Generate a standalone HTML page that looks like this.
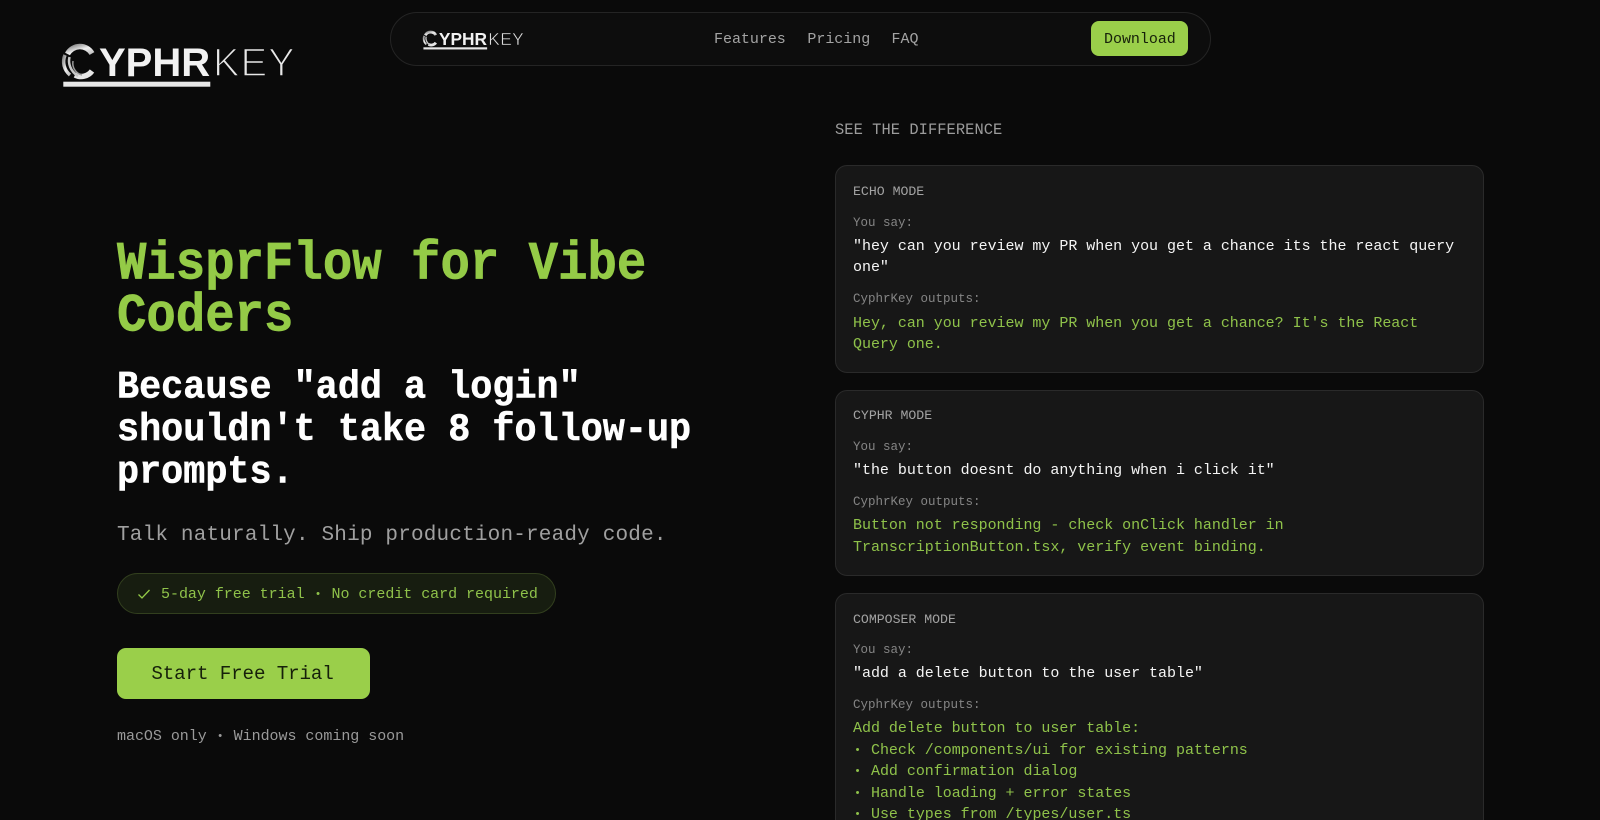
<!DOCTYPE html>
<html lang="en">
<head>
<meta charset="utf-8">
<title>CyphrKey</title>
<style>
html,body{margin:0;padding:0;width:1600px;height:820px;overflow:hidden;background:#0a0a0a}
body{position:relative;font-family:"Liberation Mono",monospace}
.t{position:absolute;white-space:nowrap;margin:0;font-weight:400}
.card{position:absolute;left:835px;width:647px;background:#171717;border:1px solid #2a2a2a;border-radius:12px}
.lab{left:853px;font-size:13.2px;line-height:20px;color:#a3a3a3}
.you{left:853px;font-size:12.5px;line-height:20px;color:#858585}
.usr{left:853px;font-size:15px;line-height:21.4px;letter-spacing:-.03px;color:#f5f5f5}
.out{left:853px;font-size:15px;line-height:21.4px;letter-spacing:-.03px;color:#8fc24a}
.nav{font-size:15px;line-height:20px;letter-spacing:-.03px;color:#a3a3a3;top:30px}
.b{display:inline-block;width:9px;text-align:center;font-size:11px;line-height:0;vertical-align:1px}
</style>
</head>
<body>
<svg width="0" height="0" style="position:absolute">
<defs>
<linearGradient id="g" x1="0" y1="0" x2="1" y2="1"><stop offset="0" stop-color="#8a8a8a"/><stop offset=".5" stop-color="#f0f0f0"/><stop offset="1" stop-color="#bdbdbd"/></linearGradient>
</defs>
</svg>

<svg style="position:absolute;left:60px;top:42px" width="240" height="48" viewBox="0 0 240 48">
<g fill="none">
<path d="M32 11.500A14 14 0 0 0 7.500 12" stroke="url(#g)" stroke-width="5.500"/>
<path d="M32 29A13.500 13.500 0 0 1 15 33" stroke="#e6e6e6" stroke-width="5.500"/>
<path d="M5 13C2 20 4 28 10 33" stroke="url(#g)" stroke-width="3.500"/>
<path d="M9.500 15C8 21 10 29 18 34" stroke="#c8c8c8" stroke-width="2.500"/>
<path d="M13 19C12 25 15 31 22 33" stroke="#9a9a9a" stroke-width="1.500"/>
</g>
<text x="39" y="34" font-family="Liberation Sans" font-weight="700" font-size="40" fill="#f2f2f2">YPHR</text>
<text x="153" y="34" font-family="Liberation Sans" font-weight="400" font-size="40" letter-spacing=".8" fill="#e8e8e8" stroke="#0a0a0a" stroke-width="1.500">KEY</text>
<rect x="3.300" y="39.700" width="147" height="5" fill="#e8e8e8"/>
</svg>

<div style="position:absolute;left:390px;top:12px;width:819px;height:52px;border:1px solid #242424;border-radius:28px;background:#0d0d0d"></div>
<svg style="position:absolute;left:421.700px;top:29.500px" width="104" height="21" viewBox="0 0 240 48">
<g fill="none">
<path d="M32 11.500A14 14 0 0 0 7.500 12" stroke="url(#g)" stroke-width="6.500"/>
<path d="M32 29A13.500 13.500 0 0 1 15 33" stroke="#e6e6e6" stroke-width="6.500"/>
<path d="M5 13C2 20 4 28 10 33" stroke="url(#g)" stroke-width="4"/>
<path d="M9.500 15C8 21 10 29 18 34" stroke="#c8c8c8" stroke-width="3"/>
</g>
<text x="39" y="34" font-family="Liberation Sans" font-weight="700" font-size="40" fill="#f2f2f2">YPHR</text>
<text x="153" y="34" font-family="Liberation Sans" font-weight="400" font-size="40" letter-spacing=".8" fill="#dcdcdc" stroke="#0d0d0d" stroke-width="1">KEY</text>
<rect x="3.300" y="39.700" width="147" height="5" fill="#e8e8e8"/>
</svg>
<a class="t nav" style="left:714px">Features</a>
<a class="t nav" style="left:807.400px">Pricing</a>
<a class="t nav" style="left:891.500px">FAQ</a>
<div style="position:absolute;left:1091px;top:21px;width:97px;height:35px;border-radius:8px;background:#9acf4a"></div>
<a class="t nav" style="left:1104px;color:#16200a">Download</a>

<h1 class="t" style="left:117px;top:239.300px;font-size:49px;line-height:46.800px;font-weight:700;color:#94cb47;-webkit-text-stroke:.6px #94cb47;transform:scaleY(1.1);transform-origin:0 0">WisprFlow for Vibe<br>Coders</h1>
<h2 class="t" style="left:117px;top:366.800px;font-size:36.800px;line-height:40.200px;font-weight:700;color:#fff;-webkit-text-stroke:.5px #fff;transform:scaleY(1.06);transform-origin:0 0">Because "add a login"<br>shouldn't take 8 follow-up<br>prompts.</h2>
<p class="t" style="left:117px;top:523px;font-size:21px;line-height:26px;letter-spacing:.18px;color:#a0a0a0">Talk naturally. Ship production-ready code.</p>

<div style="position:absolute;left:117px;top:573px;width:437px;height:39px;border:1px solid #323f1e;border-radius:21px;background:#171d10"></div>
<svg style="position:absolute;left:137px;top:587px" width="14" height="14" viewBox="0 0 14 14"><path d="M1.500 7.500L5 11L12.500 3" fill="none" stroke="#94cb47" stroke-width="1.300"/></svg>
<div class="t" style="left:161px;top:585px;font-size:15px;line-height:20px;letter-spacing:-.03px;color:#8fc24a">5-day free trial <span class="b">•</span> No credit card required</div>

<div style="position:absolute;left:117px;top:648px;width:253px;height:51px;border-radius:9px;background:#9acf4a"></div>
<div class="t" style="left:151.400px;top:661.900px;font-size:19.200px;line-height:24px;letter-spacing:-.12px;color:#16200a">Start Free Trial</div>
<div class="t" style="left:117px;top:727px;font-size:15px;line-height:20px;letter-spacing:-.03px;color:#9a9a9a">macOS only <span class="b">•</span> Windows coming soon</div>

<div class="t" style="left:835px;top:120px;font-size:15.400px;line-height:20px;letter-spacing:.06px;color:#9c9c9c">SEE THE DIFFERENCE</div>

<div class="card" style="top:165px;height:206px"></div>
<div class="t lab" style="top:182px">ECHO MODE</div>
<div class="t you" style="top:213px">You say:</div>
<div class="t usr" style="top:235.600px">"hey can you review my PR when you get a chance its the react query<br>one"</div>
<div class="t you" style="top:289px">CyphrKey outputs:</div>
<div class="t out" style="top:312.800px">Hey, can you review my PR when you get a chance? It's the React<br>Query one.</div>

<div class="card" style="top:390px;height:184px"></div>
<div class="t lab" style="top:406.200px">CYPHR MODE</div>
<div class="t you" style="top:437px">You say:</div>
<div class="t usr" style="top:460px">"the button doesnt do anything when i click it"</div>
<div class="t you" style="top:492px">CyphrKey outputs:</div>
<div class="t out" style="top:515.300px">Button not responding - check onClick handler in<br>TranscriptionButton.tsx, verify event binding.</div>

<div class="card" style="top:593px;height:300px"></div>
<div class="t lab" style="top:609.700px">COMPOSER MODE</div>
<div class="t you" style="top:639.600px">You say:</div>
<div class="t usr" style="top:662.600px">"add a delete button to the user table"</div>
<div class="t you" style="top:695px">CyphrKey outputs:</div>
<div class="t out" style="top:718.300px">Add delete button to user table:<br><span class="b">•</span> Check /components/ui for existing patterns<br><span class="b">•</span> Add confirmation dialog<br><span class="b">•</span> Handle loading + error states<br><span class="b">•</span> Use types from /types/user.ts</div>
</body>
</html>
